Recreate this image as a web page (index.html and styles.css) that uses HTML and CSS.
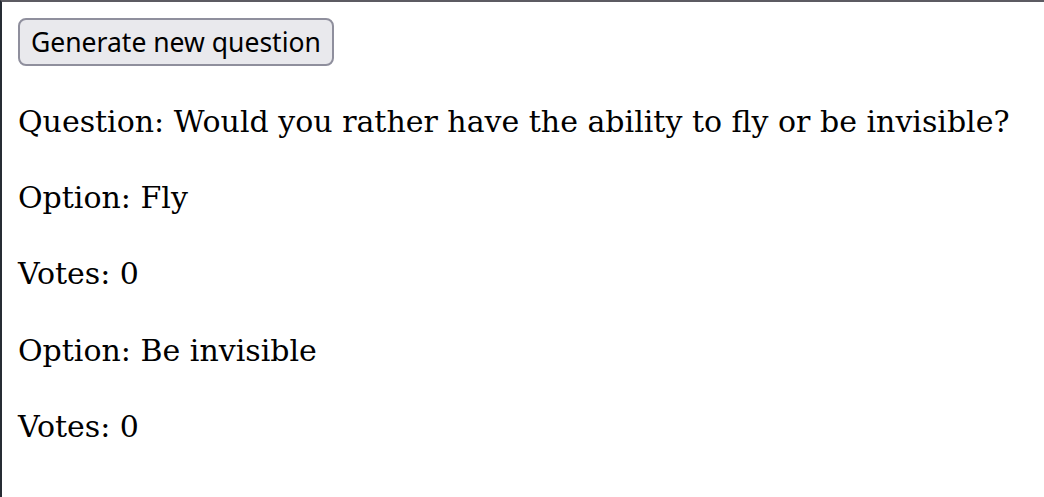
FILE: index.html
```html
<!DOCTYPE html>
<html>
<head>
<meta charset="utf-8">
<link rel="stylesheet" href="styles.css">
</head>
<body>
<div class="app">
  <button class="gen-btn">Generate new question</button>
  <p class="line">Question: Would you rather have the ability to fly or be invisible?</p>
  <p class="line">Option: Fly</p>
  <p class="line">Votes: 0</p>
  <p class="line">Option: Be invisible</p>
  <p class="line">Votes: 0</p>
</div>
</body>
</html>
```
FILE: styles.css
```css
html, body {
  margin: 0;
  padding: 0;
  background: #ffffff;
}
body {
  border-top: 2px solid #5c5b62;
  border-left: 2px solid #262c34;
  height: 497px;
  box-sizing: border-box;
  overflow: hidden;
}
.app {
  padding: 16px;
}
.gen-btn {
  display: block;
  font-family: "Noto Sans", sans-serif;
  font-size: 26.5px;
  line-height: 36px;
  color: #000;
  background: #e9e9ed;
  border: 2px solid #8f8f9d;
  border-radius: 8px;
  padding: 4px 11px;
  margin: 0 0 32px 0;
}
.line {
  font-family: "DejaVu Serif", serif;
  font-size: 30px;
  line-height: 48.2px;
  margin: 28px 0;
  color: #000;
}
```
